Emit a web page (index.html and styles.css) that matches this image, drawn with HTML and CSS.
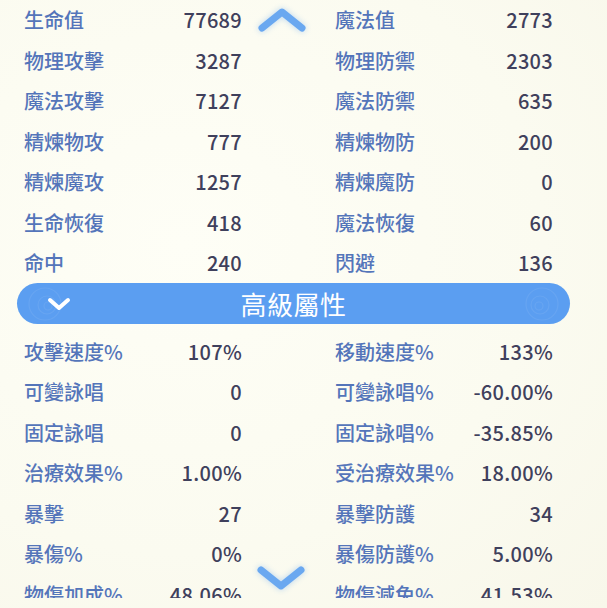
FILE: index.html
```html
<!DOCTYPE html>
<html lang="zh-Hant">
<head>
<meta charset="utf-8">
<link rel="stylesheet" href="styles.css">
</head>
<body>
<div class="panel">
  <div class="stats">
    <div class="cell"><span class="k">生命值</span><span class="v">77689</span></div>
    <div class="cell"><span class="k">魔法值</span><span class="v">2773</span></div>
    <div class="cell"><span class="k">物理攻擊</span><span class="v">3287</span></div>
    <div class="cell"><span class="k">物理防禦</span><span class="v">2303</span></div>
    <div class="cell"><span class="k">魔法攻擊</span><span class="v">7127</span></div>
    <div class="cell"><span class="k">魔法防禦</span><span class="v">635</span></div>
    <div class="cell"><span class="k">精煉物攻</span><span class="v">777</span></div>
    <div class="cell"><span class="k">精煉物防</span><span class="v">200</span></div>
    <div class="cell"><span class="k">精煉魔攻</span><span class="v">1257</span></div>
    <div class="cell"><span class="k">精煉魔防</span><span class="v">0</span></div>
    <div class="cell"><span class="k">生命恢復</span><span class="v">418</span></div>
    <div class="cell"><span class="k">魔法恢復</span><span class="v">60</span></div>
    <div class="cell"><span class="k">命中</span><span class="v">240</span></div>
    <div class="cell"><span class="k">閃避</span><span class="v">136</span></div>
  </div>

  <div class="banner">
    <svg class="deco deco-l" width="40" height="40" viewBox="0 0 40 40"><circle cx="20" cy="20" r="16" fill="none" stroke="#fff" stroke-width="1.2"/><circle cx="22" cy="21" r="9" fill="none" stroke="#fff" stroke-width="1.2"/><circle cx="23" cy="22" r="4" fill="none" stroke="#fff" stroke-width="1.2"/></svg>
    <svg class="deco deco-r" width="40" height="40" viewBox="0 0 40 40"><circle cx="20" cy="20" r="16" fill="none" stroke="#fff" stroke-width="1.2"/><circle cx="18" cy="21" r="9" fill="none" stroke="#fff" stroke-width="1.2"/><circle cx="17" cy="22" r="4" fill="none" stroke="#fff" stroke-width="1.2"/></svg>
    <svg class="banner-chev" width="24" height="14" viewBox="0 0 24 14"><path d="M3 3 L12 11 L21 3" fill="none" stroke="#fff" stroke-width="4" stroke-linecap="round" stroke-linejoin="round"/></svg>
    <span class="title">高級屬性</span>
  </div>

  <div class="stats stats-adv">
    <div class="cell"><span class="k">攻擊速度%</span><span class="v">107%</span></div>
    <div class="cell"><span class="k">移動速度%</span><span class="v">133%</span></div>
    <div class="cell"><span class="k">可變詠唱</span><span class="v">0</span></div>
    <div class="cell"><span class="k">可變詠唱%</span><span class="v">-60.00%</span></div>
    <div class="cell"><span class="k">固定詠唱</span><span class="v">0</span></div>
    <div class="cell"><span class="k">固定詠唱%</span><span class="v">-35.85%</span></div>
    <div class="cell"><span class="k">治療效果%</span><span class="v">1.00%</span></div>
    <div class="cell"><span class="k">受治療效果%</span><span class="v">18.00%</span></div>
    <div class="cell"><span class="k">暴擊</span><span class="v">27</span></div>
    <div class="cell"><span class="k">暴擊防護</span><span class="v">34</span></div>
    <div class="cell"><span class="k">暴傷%</span><span class="v">0%</span></div>
    <div class="cell"><span class="k">暴傷防護%</span><span class="v">5.00%</span></div>
    <div class="cell"><span class="k">物傷加成%</span><span class="v">48.06%</span></div>
    <div class="cell"><span class="k">物傷減免%</span><span class="v">41.53%</span></div>
  </div>
</div>

<svg class="arrow arrow-up" width="52" height="32" viewBox="0 0 52 32"><path d="M6 26 L26 10 L46 26" fill="none" stroke="#6aa8f0" stroke-width="7" stroke-linecap="round" stroke-linejoin="round"/></svg>
<svg class="arrow arrow-down" width="52" height="32" viewBox="0 0 52 32"><path d="M6 6 L26 22 L46 6" fill="none" stroke="#6aa8f0" stroke-width="7" stroke-linecap="round" stroke-linejoin="round"/></svg>
</body>
</html>
```

FILE: styles.css
```css
html, body {
  margin: 0;
  padding: 0;
}
body {
  width: 607px;
  height: 608px;
  background: radial-gradient(ellipse at 30% 40%, #fefef6 0%, #fbfbf0 60%, #f8f7ea 100%);
  font-family: "Noto Sans CJK TC", "Noto Sans", sans-serif;
  position: relative;
  overflow: hidden;
}
.panel {
  height: 598px;
  overflow: hidden;
}
.stats {
  display: grid;
  grid-template-columns: 218px 218px;
  column-gap: 93px;
  grid-auto-rows: 40.5px;
  padding-left: 24px;
}
.stats-adv {
  margin-top: 8px;
}
.cell {
  display: flex;
  justify-content: space-between;
  align-items: center;
  font-size: 20px;
  line-height: 1;
  white-space: nowrap;
}
.k {
  color: #5475ba;
  font-weight: 500;
}
.v {
  color: #3f405c;
  font-family: "Noto Sans CJK TC", "Noto Sans", sans-serif;
  font-weight: 500;
  letter-spacing: 0.3px;
}
.banner {
  position: relative;
  margin: -1px 37px 0 17px;
  height: 41px;
  border-radius: 21px;
  background: #5b9ef1;
  display: flex;
  align-items: center;
  justify-content: center;
  overflow: hidden;
}
.title {
  color: #ffffff;
  font-size: 26px;
  font-weight: 400;
  letter-spacing: 0.5px;
}
.banner-chev {
  position: absolute;
  left: 30px;
  top: 14px;
}
.deco {
  position: absolute;
  top: 1px;
  opacity: 0.07;
}
.deco-l { left: 8px; }
.deco-r { right: 8px; }
.arrow {
  position: absolute;
  filter: drop-shadow(0 0 3px rgba(106, 168, 240, 0.45));
}
.arrow-up {
  left: 256px;
  top: 2px;
}
.arrow-down {
  left: 255px;
  top: 564px;
}
```
